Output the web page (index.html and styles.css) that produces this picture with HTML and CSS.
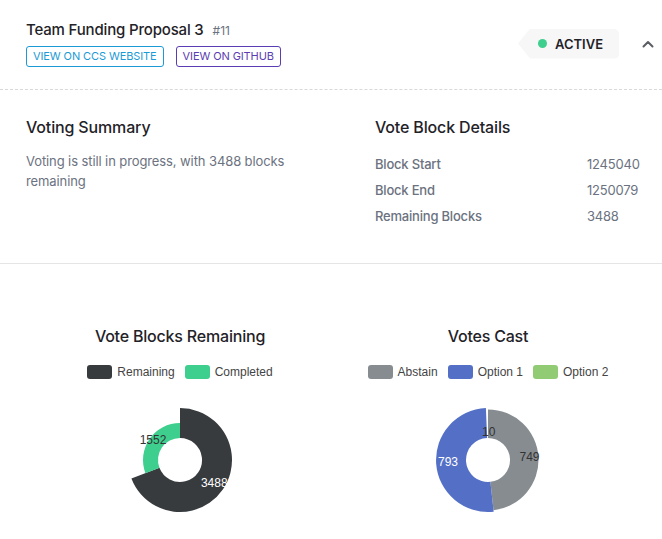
FILE: index.html
```html
<!DOCTYPE html>
<html>
<head>
<meta charset="utf-8">
<link rel="stylesheet" href="styles.css">
</head>
<body>
<div class="page">
  <header class="header">
    <div class="header-left">
      <div class="title-row">
        <span class="title">Team Funding Proposal 3</span>
        <span class="num">#11</span>
      </div>
      <div class="links">
        <a class="btn btn-ccs">VIEW ON CCS WEBSITE</a>
        <a class="btn btn-gh">VIEW ON GITHUB</a>
      </div>
    </div>
    <div class="header-right">
      <div class="badge"><span class="dot"></span><span class="badge-text">ACTIVE</span></div>
      <svg class="chevron" width="12" height="8" viewBox="0 0 12 8"><path d="M1.5 6.5 L6 2 L10.5 6.5" fill="none" stroke="#5b5f63" stroke-width="2" stroke-linecap="round" stroke-linejoin="round"/></svg>
    </div>
  </header>

  <section class="details">
    <div class="summary">
      <h2 class="h2">Voting Summary</h2>
      <p class="desc">Voting is still in progress, with 3488 blocks remaining</p>
    </div>
    <div class="blocks">
      <h2 class="h2">Vote Block Details</h2>
      <div class="rows">
        <span class="lbl">Block Start</span><span class="val">1245040</span>
        <span class="lbl">Block End</span><span class="val">1250079</span>
        <span class="lbl">Remaining Blocks</span><span class="val">3488</span>
      </div>
    </div>
  </section>

  <section class="charts">
    <div class="chart">
      <h3 class="chart-title">Vote Blocks Remaining</h3>
      <div class="legend">
        <span class="item"><span class="sw sw-dark"></span>Remaining</span>
        <span class="item"><span class="sw sw-green"></span>Completed</span>
      </div>
      <svg class="pie" width="308" height="130" viewBox="0 0 308 130">
        <path d="M154,13 A52,52 0 1 1 105.41,83.52 L133.44,72.83 A22,22 0 1 0 154,43 Z" fill="#373b3e"/>
        <path d="M119.42,78.18 A37,37 0 0 1 154,28 L154,43 A22,22 0 0 0 133.44,72.83 Z" fill="#3ecf8e"/>
        <text x="127" y="44.5" class="lab lab-dark">1552</text>
        <text x="188.3" y="88" class="lab lab-light">3488</text>
      </svg>
    </div>
    <div class="chart">
      <h3 class="chart-title">Votes Cast</h3>
      <div class="legend">
        <span class="item"><span class="sw sw-gray"></span>Abstain</span>
        <span class="item"><span class="sw sw-blue"></span>Option 1</span>
        <span class="item"><span class="sw sw-lgreen"></span>Option 2</span>
      </div>
      <svg class="pie" width="308" height="130" viewBox="0 0 308 130">
        <path d="M154,14.5 A50.5,50.5 0 0 1 159.51,115.2 L156.4,86.87 A22,22 0 0 0 154,43 Z" fill="#878c91"/>
        <path d="M159.67,116.69 A52,52 0 1 1 151.89,13.04 L153.11,43.02 A22,22 0 1 0 156.4,86.87 Z" fill="#5470c6"/>
        <text x="154.7" y="36.7" class="lab lab-dark">10</text>
        <text x="195.5" y="61.7" class="lab lab-dark">749</text>
        <text x="114" y="66.7" class="lab lab-light">793</text>
      </svg>
    </div>
  </section>
</div>
</body>
</html>
```

FILE: styles.css
```css
* { box-sizing: border-box; }
html, body { margin: 0; padding: 0; background: #fff; }
body { font-family: Inter, "Noto Sans", sans-serif; color: #1f2328; }

.header {
  display: flex;
  align-items: center;
  justify-content: space-between;
  padding: 20px 8px 22px 26px;
  border-bottom: 1px dashed #d9d9d9;
}
.title-row { display: flex; align-items: baseline; height: 20px; line-height: 20px; }
.title { font-size: 15px; font-weight: 500; color: #1f2328; letter-spacing: -0.17px; }
.num { font-size: 12px; color: #6b7280; margin-left: 9px; }
.links { display: flex; gap: 12px; margin-top: 6px; }
.btn {
  display: inline-block;
  height: 21px;
  line-height: 19px;
  font-size: 11px;
  padding: 0 6px;
  border: 1px solid;
  border-radius: 3px;
  letter-spacing: -0.1px;
}
.btn-ccs { color: #1b9ad6; border-color: #1b9ad6; }
.btn-gh { color: #5b3db3; border-color: #5b3db3; }

.header-right { display: flex; align-items: center; }
.badge {
  display: flex;
  align-items: center;
  width: 101px;
  height: 30px;
  padding-left: 20px;
  background: #f7f7f8;
  border-radius: 0 5px 5px 0;
  clip-path: polygon(12px 0, 100% 0, 100% 100%, 12px 100%, 0 50%);
}
.dot { width: 9px; height: 9px; border-radius: 50%; background: #3ecf8e; margin-right: 8px; }
.badge-text { font-size: 13px; font-weight: 600; color: #1f2328; }
.chevron { margin-left: 23px; display: block; }

.details {
  display: grid;
  grid-template-columns: 349px 1fr;
  padding: 25px 26px 34px 26px;
  border-bottom: 1px solid #e5e5e5;
}
.h2 { margin: 0; font-size: 16px; font-weight: 500; line-height: 24px; color: #1f2328; letter-spacing: -0.15px; }
.summary { width: 310px; }
.desc { margin: 12px 0 0; font-size: 13px; line-height: 20px; color: #6b7280; letter-spacing: -0.1px; }
.rows {
  display: grid;
  grid-template-columns: 212px auto;
  grid-auto-rows: 26px;
  align-items: center;
  margin-top: 12px;
  font-size: 13px;
  color: #6b7280;
  letter-spacing: -0.2px;
}
.lbl { font-weight: 500; }
.val { font-weight: 400; }

.charts {
  display: grid;
  grid-template-columns: 308px 308px;
  padding: 60px 0 0 26px;
}
.chart { display: flex; flex-direction: column; align-items: center; }
.chart-title { margin: 0; font-size: 16px; font-weight: 500; line-height: 24px; color: #1f2328; letter-spacing: -0.2px; }
.legend {
  display: flex;
  gap: 10px;
  margin-top: 17px;
  height: 14px;
  font-family: "Liberation Sans", Arial, sans-serif;
  font-size: 12px;
  line-height: 14px;
  color: #444;
}
.item { display: flex; align-items: center; }
.sw { width: 25px; height: 14px; border-radius: 3px; margin-right: 5px; }
.sw-dark { background: #373b3e; }
.sw-green { background: #3ecf8e; }
.sw-gray { background: #878c91; }
.sw-blue { background: #5470c6; }
.sw-lgreen { background: #91cc75; }
.pie { display: block; margin-top: 16px; }
.lab { font-family: "Liberation Sans", Arial, sans-serif; font-size: 12px; text-anchor: middle; dominant-baseline: central; }
.lab-dark { fill: #333; }
.lab-light { fill: #fff; }
```
